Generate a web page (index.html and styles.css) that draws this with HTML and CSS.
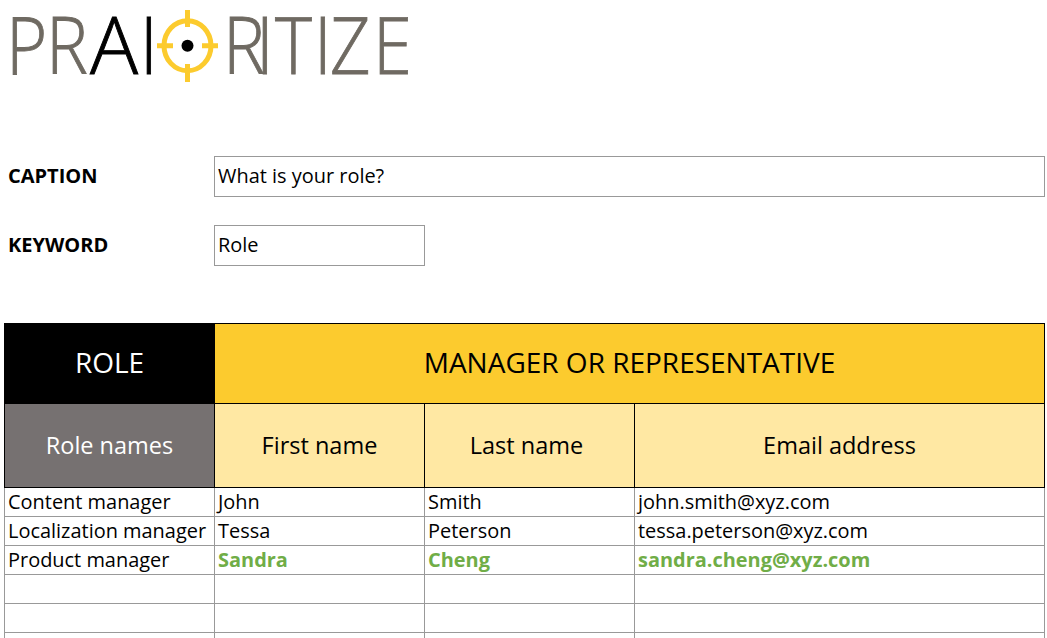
FILE: index.html
```html
<!DOCTYPE html>
<html lang="en">
<head>
<meta charset="utf-8">
<title>Prairitize</title>
<link rel="stylesheet" href="styles.css">
</head>
<body>
<header class="logo">
  <svg class="logo-art" width="420" height="90" viewBox="0 0 420 90" role="img" aria-label="PRAIORITIZE">
    <text class="word dark" y="74" x="90">A</text>
    <g transform="scale(0.88 1)">
      <text class="word" y="74" x="6.8 52.3">PR</text>
      <text class="word dark" y="74" x="159">I</text>
      <text class="word" y="74" x="253.4 291 312.5 356.8 375 423.9">RITIZE</text>
    </g>
    <ellipse cx="187.5" cy="45.7" rx="23.5" ry="25" fill="none" stroke="#fccb2e" stroke-width="5"/>
    <path d="M187.5 10V27M187.5 64V82M157 45.7H173M202 45.7H218" stroke="#fccb2e" stroke-width="5" fill="none"/>
    <circle cx="187.5" cy="45.7" r="6" fill="#000"/>
  </svg>
</header>
<section class="form">
  <div class="field">
    <label class="label">CAPTION</label>
    <div class="box">What is your role?</div>
  </div>
  <div class="field">
    <label class="label">KEYWORD</label>
    <div class="box box-short">Role</div>
  </div>
</section>
<table class="sheet">
  <colgroup><col class="c1"><col class="c2"><col class="c3"><col class="c4"></colgroup>
  <thead>
    <tr class="head1">
      <th class="black">ROLE</th>
      <th class="amber" colspan="3">MANAGER OR REPRESENTATIVE</th>
    </tr>
    <tr class="head2">
      <th class="grey">Role names</th>
      <th class="pale">First name</th>
      <th class="pale pale-last">Last name</th>
      <th class="pale">Email address</th>
    </tr>
  </thead>
  <tbody>
    <tr><td>Content manager</td><td>John</td><td>Smith</td><td>john.smith@xyz.com</td></tr>
    <tr><td>Localization manager</td><td>Tessa</td><td>Peterson</td><td>tessa.peterson@xyz.com</td></tr>
    <tr><td>Product manager</td><td class="pick">Sandra</td><td class="pick">Cheng</td><td class="pick">sandra.cheng@xyz.com</td></tr>
    <tr><td></td><td></td><td></td><td></td></tr>
    <tr><td></td><td></td><td></td><td></td></tr>
    <tr><td></td><td></td><td></td><td></td></tr>
  </tbody>
</table>
</body>
</html>
```

FILE: styles.css
```css
html, body {
  margin: 0;
  padding: 0;
  height: 638px;
  overflow: hidden;
  background: #fff;
}
body {
  font-family: "Open Sans", sans-serif;
  color: #000;
  font-size: 20px;
}
.logo {
  height: 156px;
}
.logo-art { display: block; }
.word {
  font-family: "Open Sans", sans-serif;
  font-weight: 300;
  font-size: 80px;
  fill: #6f6a62;
  stroke: #6f6a62;
  stroke-width: 0.9px;
}
.word.dark { fill: #000; stroke: #000; }
.form {
  height: 167px;
  display: flex;
  flex-direction: column;
  gap: 28px;
  align-items: stretch;
}
.field {
  display: flex;
  align-items: center;
  height: 41px;
}
.label {
  width: 214px;
  box-sizing: border-box;
  padding-left: 8px;
  padding-bottom: 2px;
  font-weight: 700;
  flex: none;
}
.box {
  box-sizing: border-box;
  width: 831px;
  height: 41px;
  border: 1px solid #999;
  padding-left: 3px;
  line-height: 38px;
  font-size: 19.95px;
}
.box-short { width: 211px; }
.sheet {
  border-collapse: collapse;
  table-layout: fixed;
  width: 1041px;
  margin-left: 4px;
}
.c1, .c2, .c3 { width: 210px; }
.c4 { width: 410px; }
.sheet th {
  border: 1px solid #000;
  font-weight: 400;
  padding: 0;
  text-align: center;
  box-sizing: border-box;
}
.head1 th { height: 80px; font-size: 28px; padding-bottom: 4px; }
.head2 th { height: 84px; font-size: 23.5px; padding-bottom: 2px; }
.head2 .pale-last { padding-right: 6px; }
.black { background: #000; color: #fff; }
.amber { background: #fccb2e; }
.grey { background: #767171; color: #fff; }
.pale { background: #ffe8a3; }
.sheet td {
  border: 1px solid #999;
  height: 28px;
  padding: 0 3px;
  line-height: 28px;
  font-size: 19.95px;
  white-space: nowrap;
  overflow: hidden;
}
.sheet tbody tr:first-child td { border-top-color: #000; }
.pick { color: #70ad47; font-weight: 700; }
```
